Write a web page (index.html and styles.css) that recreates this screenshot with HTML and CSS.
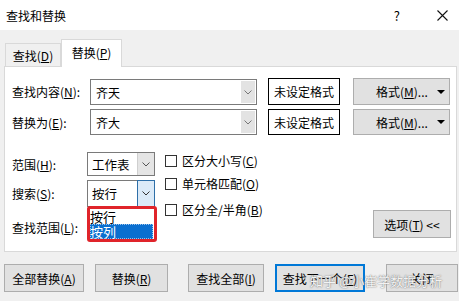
FILE: index.html
```html
<!DOCTYPE html>
<html>
<head>
<meta charset="utf-8">
<link rel="stylesheet" href="styles.css">
</head>
<body>
<div class="win">
  <div class="titlebar">
    <span class="title">查找和替换</span>
    <span class="help">?</span>
    <span class="close"><svg width="11" height="11" viewBox="0 0 11 11"><path d="M0.5 0.5L10.5 10.5M10.5 0.5L0.5 10.5" stroke="#111" stroke-width="1.1" fill="none"/></svg></span>
  </div>
  <div class="main">
    <div class="tabs">
      <div class="tab">查找(<u>D</u>)</div>
      <div class="tab active">替换(<u>P</u>)</div>
    </div>
    <div class="panel">
      <div class="row r1">
        <span class="lbl">查找内容(<u>N</u>):</span>
        <div class="combo"><span class="val">齐天</span><span class="arr"><svg width="8" height="5" viewBox="0 0 8 5"><path d="M0.5 0.5L4 4L7.5 0.5" stroke="#777" fill="none"/></svg></span></div>
        <div class="fmtbox">未设定格式</div>
        <div class="btn fmtbtn"><span>格式(<u>M</u>)...</span><span class="tri"></span></div>
      </div>
      <div class="row r2">
        <span class="lbl">替换为(<u>E</u>):</span>
        <div class="combo"><span class="val">齐大</span><span class="arr"><svg width="8" height="5" viewBox="0 0 8 5"><path d="M0.5 0.5L4 4L7.5 0.5" stroke="#777" fill="none"/></svg></span></div>
        <div class="fmtbox">未设定格式</div>
        <div class="btn fmtbtn"><span>格式(<u>M</u>)...</span><span class="tri"></span></div>
      </div>
      <div class="lower">
        <div class="fields">
          <div class="field f1">
            <span class="flbl">范围(<u>H</u>):</span>
            <div class="select"><span class="sval">工作表</span><span class="sarr"><svg width="8" height="5" viewBox="0 0 8 5"><path d="M0.5 0.5L4 4L7.5 0.5" stroke="#555" fill="none"/></svg></span></div>
          </div>
          <div class="field f2">
            <span class="flbl">搜索(<u>S</u>):</span>
            <div class="select open"><span class="sval">按行</span><span class="sarr focus"><svg width="8" height="5" viewBox="0 0 8 5"><path d="M0.5 0.5L4 4L7.5 0.5" stroke="#333" fill="none"/></svg></span>
              <div class="dropdown">
                <div class="opt">按行</div>
                <div class="opt sel">按列</div>
              </div>
            </div>
          </div>
          <div class="field f3">
            <span class="flbl">查找范围(<u>L</u>):</span>
          </div>
        </div>
        <div class="checks">
          <div class="chk c1"><span class="box"></span>区分大小写(<u>C</u>)</div>
          <div class="chk c2"><span class="box"></span>单元格匹配(<u>O</u>)</div>
          <div class="chk c3"><span class="box"></span>区分全/半角(<u>B</u>)</div>
        </div>
        <div class="btn opts">选项(<u>T</u>) &lt;&lt;</div>
      </div>
    </div>
    <div class="buttons">
      <div class="btn b1">全部替换(<u>A</u>)</div>
      <div class="btn b2">替换(<u>R</u>)</div>
      <div class="btn b3">查找全部(<u>I</u>)</div>
      <div class="btn b4 default">查找下一个(<u>F</u>)</div>
      <div class="btn b5">关闭</div>
    </div>
  </div>
  <div class="watermark">知乎 @小崔学数据分析</div>
</div>
</body>
</html>
```

FILE: styles.css
```css
* { box-sizing: border-box; }
html, body { margin: 0; padding: 0; }
body {
  width: 459px;
  height: 301px;
  overflow: hidden;
  font-family: "Noto Sans CJK SC", "Microsoft YaHei", sans-serif;
  font-size: 12px;
  color: #000;
  background: #f0f0f0;
}
u { text-decoration: underline; text-underline-offset: 1px; }
.win { position: relative; width: 459px; height: 301px; }

.titlebar {
  height: 30px;
  background: #fff;
  display: flex;
  align-items: center;
  padding-left: 6px;
}
.title { font-size: 12px; }
.help { margin-left: auto; font-size: 13px; margin-right: 37px; }
.close { display: flex; margin-right: 11px; }

.main { height: 271px; background: #f0f0f0; }

.tabs {
  height: 36px;
  display: flex;
  align-items: flex-end;
  padding-left: 5px;
}
.tab {
  height: 23px;
  width: 56px;
  border: 1px solid #d9d9d9;
  border-bottom: 0;
  display: flex;
  align-items: center;
  justify-content: center;
  background: #f0f0f0;
}
.tab.active {
  width: 61px;
  height: 28px;
  margin-bottom: -1px;
  background: #fff;
  position: relative;
  z-index: 1;
  padding-bottom: 2px;
}

.panel {
  margin-left: 4px;
  width: 453px;
  height: 186px;
  background: #fff;
  border: 1px solid #d9d9d9;
  padding: 11px 5px 0 7px;
  position: relative;
}

.row { display: flex; height: 27px; }
.r2 { margin-top: 4px; height: 26px; }
.lbl { width: 78px; display: flex; align-items: center; }
.combo {
  width: 167px;
  border: 1px solid #7a7a7a;
  display: flex;
  align-items: center;
  background: #fff;
}
.r1 .combo { margin-top: 1px; height: 26px; }
.val { flex: 1; padding-left: 5px; }
.arr {
  width: 14px;
  align-self: stretch;
  margin: 1px;
  background: #e3e3e3;
  display: flex;
  align-items: center;
  justify-content: center;
}
.fmtbox {
  margin-left: 11px;
  width: 72px;
  border: 1px solid #000;
  display: flex;
  align-items: center;
  justify-content: center;
}
.btn {
  background: #e1e1e1;
  border: 1px solid #adadad;
  display: flex;
  align-items: center;
  justify-content: center;
}
.fmtbtn {
  margin-left: 13px;
  width: 97px;
  justify-content: flex-start;
  padding-left: 22px;
  padding-right: 4px;
}
.tri {
  margin-left: auto;
  width: 0;
  height: 0;
  border-left: 4px solid transparent;
  border-right: 4px solid transparent;
  border-top: 4px solid #000;
}

.lower { display: flex; margin-top: 17px; }
.fields { width: 143px; }
.field { display: flex; }
.f1 { height: 24px; }
.f2 { height: 27px; margin-top: 4px; }
.f3 { height: 16px; margin-top: 12px; }
.flbl { width: 75px; display: flex; align-items: center; }
.select {
  width: 68px;
  border: 1px solid #7a7a7a;
  display: flex;
  align-items: center;
  background: #fff;
  position: relative;
}
.sval { flex: 1; padding-left: 4px; font-size: 12.5px; }
.sarr {
  width: 17px;
  align-self: stretch;
  background: #e5e5e5;
  border-left: 1px solid #cfcfcf;
  display: flex;
  align-items: center;
  justify-content: center;
}
.sarr.focus {
  background: #dbeaf8;
  border: 1px solid #2e6fa8;
  margin: -1px -1px -1px 0;
  width: 18px;
}
.dropdown {
  position: absolute;
  left: -1px;
  top: 100%;
  width: 70px;
  height: 36px;
  border: 3px solid #e0242a;
  border-radius: 3px;
  background: #fff;
  z-index: 2;
  font-size: 13px;
  padding-right: 1px;
}
.opt { height: 15px; line-height: 15px; }
.opt.sel {
  background: #0a6fd0;
  color: #fff;
  outline: 1px dotted #9cc3ea;
  outline-offset: -1px;
}

.checks { margin-left: 10px; }
.chk { display: flex; align-items: center; height: 17px; }
.c2 { margin-top: 6px; }
.c3 { margin-top: 9px; }
.box {
  width: 12px;
  height: 12px;
  border: 1px solid #333;
  margin-right: 5px;
  background: #fff;
}
.opts {
  margin-left: auto;
  margin-top: 58px;
  width: 78px;
  height: 28px;
}

.buttons { display: flex; margin-top: 12px; padding-left: 4px; }
.buttons .btn { height: 28px; }
.b1 { width: 80px; }
.b2 { width: 73px; margin-left: 11px; }
.b3 { width: 76px; margin-left: 20px; }
.b4 { width: 90px; margin-left: 11px; }
.b5 { width: 72px; margin-left: 21px; }
.default { border: 2px solid #0078d7; }

.watermark {
  position: absolute;
  left: 310px;
  top: 271px;
  font-size: 13px;
  color: rgba(255,255,255,0.92);
  text-shadow: 0 0 1px #777, 0 0 2px #999;
  z-index: 5;
}
```
